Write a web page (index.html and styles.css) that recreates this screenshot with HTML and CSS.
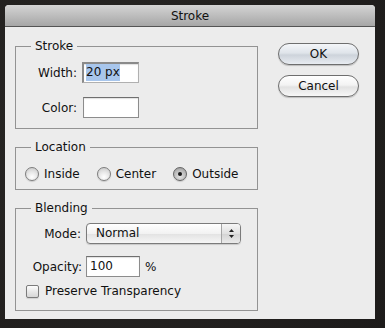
FILE: index.html
```html
<!DOCTYPE html>
<html lang="en">
<head>
  <meta charset="UTF-8">
  <title>Stroke</title>
  <link rel="stylesheet" href="styles.css">
</head>
<body>

  <div class="window">
    <div class="titlebar">Stroke</div>

    <div class="content">
      <div class="groups">

        <fieldset class="group stroke">
          <legend>Stroke</legend>
          <div class="form-grid">
            <label>Width:</label>
            <div class="field width"><span class="selected">20 px</span></div>
            <label>Color:</label>
            <div class="field color"></div>
          </div>
        </fieldset>

        <fieldset class="group location">
          <legend>Location</legend>
          <div class="radios">
            <span class="option"><span class="radio"></span>Inside</span>
            <span class="option"><span class="radio"></span>Center</span>
            <span class="option"><span class="radio checked"></span>Outside</span>
          </div>
        </fieldset>

        <fieldset class="group blending">
          <legend>Blending</legend>
          <div class="form-grid">
            <label>Mode:</label>
            <div class="popup">
              <span class="popup-value">Normal</span>
              <span class="popup-arrows">
                <svg width="7" height="11" viewBox="0 0 7 11">
                  <path d="M3.5 1 L6 4 L1 4 Z" fill="#222"/>
                  <path d="M3.5 10 L6 7 L1 7 Z" fill="#222"/>
                </svg>
              </span>
            </div>
            <label>Opacity:</label>
            <div class="opacity-row">
              <div class="field opacity">100</div>
              <span class="unit">%</span>
            </div>
          </div>
          <div class="check-row">
            <span class="checkbox"></span>Preserve Transparency
          </div>
        </fieldset>

      </div>

      <div class="actions">
        <button class="btn default">OK</button>
        <button class="btn">Cancel</button>
      </div>
    </div>
  </div>

</body>
</html>
```

FILE: styles.css
```css
html, body {
  margin: 0;
  height: 100%;
}

body {
  background: #23211f;
  background-image: radial-gradient(circle at 30% 40%, #2a2826 0%, #1d1b1a 100%);
  font-family: "DejaVu Sans", sans-serif;
  font-size: 12px;
  color: #111;
  overflow: hidden;
}

.window {
  margin: 5px 0 0 5px;
  width: 370px;
  height: 314px;
  background: #ececec;
  border-radius: 4px 4px 0 0;
  overflow: hidden;
}

.titlebar {
  height: 21px;
  line-height: 22px;
  text-align: center;
  background: linear-gradient(#d4d4d4, #a6a6a6);
  border-bottom: 1px solid #545454;
  color: #111;
}

.content {
  display: flex;
  padding: 11px 16px 0 10px;
}

.groups {
  width: 243px;
}

/* group boxes */
.group {
  margin: 0;
  padding: 0;
  min-width: 0;
  border: 1px solid #939393;
}

.group + .group {
  margin-top: 10px;
}

.group legend {
  margin-left: 15px;
  padding: 0 4px;
  height: 16px;
  line-height: 16px;
}

.form-grid {
  display: grid;
  align-items: center;
}

.stroke .form-grid {
  grid-template-columns: 61px 57px;
  column-gap: 5px;
  row-gap: 14px;
  padding: 8px 0 10px 0;
}

.stroke label {
  text-align: right;
}

.field {
  box-sizing: border-box;
  height: 21px;
  background: #fff;
  border: 1px solid #8c8c8c;
  border-top-color: #6f6f6f;
  box-shadow: inset 0 1px 1px rgba(0, 0, 0, 0.12);
  padding: 1px 3px;
  line-height: 17px;
}

.field.width {
  border-width: 2px 1px 1px 2px;
  border-color: #8a8a8a #b0b0b0 #b0b0b0 #8a8a8a;
  padding: 0 2px;
}

.selected {
  display: inline-block;
  background: #a8c6ec;
  line-height: 17px;
}

.field.color {
  width: 56px;
  margin-left: 1px;
}

/* location */
.radios {
  display: flex;
  align-items: center;
  gap: 17px;
  height: 18px;
  padding: 10px 0 6px 9px;
}

.option {
  display: flex;
  align-items: center;
  gap: 5px;
}

.radio {
  box-sizing: border-box;
  width: 14px;
  height: 14px;
  border-radius: 50%;
  border: 1px solid #7d7d7d;
  background: radial-gradient(circle at 50% 75%, #ffffff 0%, #e8e8e8 45%, #c4c4c4 100%);
  box-shadow: 0 1px 1px rgba(0, 0, 0, 0.15);
  position: relative;
}

.radio.checked {
  background: radial-gradient(circle at 50% 70%, #e4e4e4 0%, #b8b8b8 60%, #8f8f8f 100%);
  border-color: #656565;
}

.radio.checked::after {
  content: "";
  position: absolute;
  left: 4px;
  top: 4px;
  width: 4px;
  height: 4px;
  border-radius: 50%;
  background: #1a1a1a;
}

/* blending */
.blending .form-grid {
  grid-template-columns: 66px auto;
  column-gap: 4px;
  row-gap: 12px;
  padding: 7px 0 0 0;
}

.blending label {
  text-align: right;
}

.blending label:first-of-type {
  padding-right: 1px;
}

.popup {
  box-sizing: border-box;
  width: 155px;
  height: 21px;
  display: flex;
  border: 1px solid #7b7b7b;
  border-radius: 4px;
  background: linear-gradient(#ffffff, #f2f2f2 50%, #e2e2e2 51%, #f6f6f6);
  box-shadow: 0 1px 1px rgba(0, 0, 0, 0.15);
}

.popup-value {
  flex: 1;
  padding-left: 9px;
  line-height: 19px;
}

.popup-arrows {
  width: 18px;
  border-left: 1px solid #a5a5a5;
  display: flex;
  align-items: center;
  justify-content: center;
  border-radius: 0 3px 3px 0;
  background: linear-gradient(#f6f6f6, #e0e0e0 50%, #d2d2d2 51%, #eaeaea);
}

.opacity-row {
  display: flex;
  align-items: center;
  gap: 5px;
}

.field.opacity {
  width: 54px;
}

.check-row {
  display: flex;
  align-items: center;
  gap: 6px;
  height: 18px;
  padding: 5px 0 10px 10px;
}

.checkbox {
  box-sizing: border-box;
  width: 13px;
  height: 13px;
  border: 1px solid #7b7b7b;
  border-radius: 2px;
  background: linear-gradient(#fdfdfd, #e6e6e6 55%, #d6d6d6);
  box-shadow: 0 1px 1px rgba(0, 0, 0, 0.12);
}

/* buttons */
.actions {
  margin-left: auto;
  display: flex;
  flex-direction: column;
  gap: 10px;
  padding-top: 5px;
}

.btn {
  width: 81px;
  height: 22px;
  border: 1px solid #6e6e6e;
  border-radius: 11px;
  background: linear-gradient(#ffffff, #f3f3f3 45%, #e2e2e2 55%, #f7f7f7);
  box-shadow: 0 1px 1px rgba(0, 0, 0, 0.2);
  font-family: "DejaVu Sans", sans-serif;
  font-size: 12px;
  color: #111;
  padding: 0;
}

.btn.default {
  background: linear-gradient(#f4f6f9, #dfe4ea 45%, #cdd3db 55%, #e8ecf1);
}
```
